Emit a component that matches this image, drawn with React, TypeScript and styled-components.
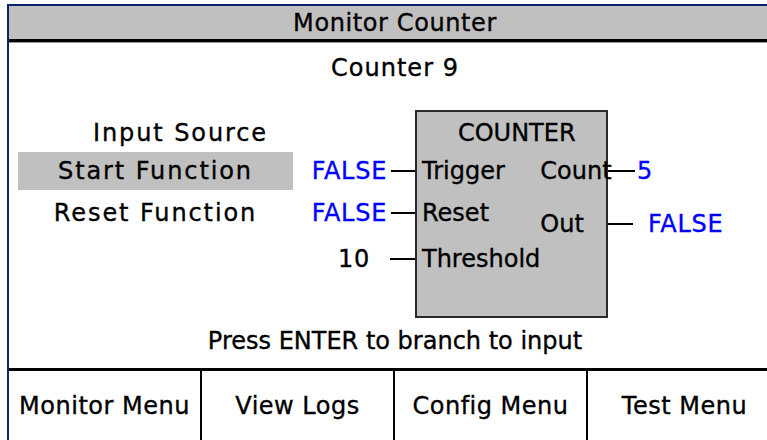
import React from 'react';
import styled, { createGlobalStyle } from 'styled-components';

const GlobalStyle = createGlobalStyle`
    html, body {
        margin: 0;
        padding: 0;
        background: #ffffff;
        overflow: hidden;
    }
    body {
        font-family: "DejaVu Sans", Verdana, sans-serif;
        color: #000000;
        -webkit-text-stroke: 0.35px currentColor;
    }
`;

const Screen = styled.div`
    box-sizing: border-box;
    margin: 4px 0 0 7px;
    width: 774px;
    height: 436px;
    border-top: 2px solid #0a246a;
    border-left: 2px solid #0a246a;
    display: flex;
    flex-direction: column;
    background: #ffffff;
`;

const TitleBar = styled.header`
    box-sizing: border-box;
    height: 36px;
    flex-shrink: 0;
    background: #c0c0c0;
    border-bottom: 3px solid #000000;
    box-shadow: 0 1px 0 #9a9a9a;
    display: flex;
    align-items: center;
    justify-content: center;
    font-size: 24px;
    line-height: 24px;
    letter-spacing: 0.6px;
`;

const Main = styled.main`
    flex: 1;
    display: flex;
    flex-direction: column;
    align-items: stretch;
`;

const Heading = styled.div`
    margin-top: 12px;
    text-align: center;
    font-size: 24px;
    line-height: 28px;
    letter-spacing: 1px;
`;

const Diagram = styled.div`
    margin-top: 28px;
    padding-left: 9px;
    height: 208px;
    display: grid;
    grid-template-columns: 275px 122px 193px 1fr;
    grid-template-rows: 4px 38px 38px 46px 46px 36px;
    font-size: 24px;
    line-height: 24px;
`;

const MenuItem = styled.div<{ $row: number; $active?: boolean; $indent?: number }>`
    grid-column: 1;
    grid-row: ${p => p.$row};
    display: flex;
    align-items: center;
    justify-content: center;
    padding-left: ${p => p.$indent ?? 0}px;
    background: ${p => (p.$active ? '#c0c0c0' : 'transparent')};
    letter-spacing: 1.9px;
`;

const InputPin = styled.div<{ $row: number }>`
    grid-column: 2;
    grid-row: ${p => p.$row};
    display: flex;
    align-items: center;
    justify-content: flex-end;
`;

const OutputPin = styled.div<{ $row: number; $low?: boolean }>`
    grid-column: 4;
    grid-row: ${p => p.$row};
    align-self: ${p => (p.$low ? 'end' : 'stretch')};
    height: ${p => (p.$low ? '24px' : 'auto')};
    display: flex;
    align-items: center;
`;

const Value = styled.span<{ $blue?: boolean }>`
    color: ${p => (p.$blue ? '#0000ff' : '#000000')};
    letter-spacing: 0.7px;
`;

const Wire = styled.span<{ $length: number; $gap: number; $side: 'left' | 'right' }>`
    display: block;
    width: ${p => p.$length}px;
    height: 2px;
    background: #000000;
    ${p => (p.$side === 'left' ? `margin-left: ${p.$gap}px;` : `margin-right: ${p.$gap}px;`)}
`;

const Block = styled.div`
    grid-column: 3;
    grid-row: 1 / -1;
    box-sizing: border-box;
    display: grid;
    grid-template-columns: 1fr auto;
    grid-template-rows: 2px 38px 38px 46px 46px 1fr;
    padding: 0 3px 0 5px;
    background: #c0c0c0;
    border: 2px solid #2a2a2a;
`;

const BlockLabel = styled.div<{ $row: number; $col: string; $low?: boolean; $center?: boolean }>`
    grid-row: ${p => p.$row};
    grid-column: ${p => p.$col};
    justify-self: ${p => (p.$center ? 'center' : 'auto')};
    align-self: ${p => (p.$low ? 'end' : 'center')};
    white-space: nowrap;
`;

const Prompt = styled.div`
    margin-top: 11px;
    text-align: center;
    font-size: 24px;
    line-height: 24px;
`;

const SoftKeys = styled.footer`
    box-sizing: border-box;
    height: 72px;
    flex-shrink: 0;
    border-top: 3px solid #000000;
    display: grid;
    grid-template-columns: repeat(4, 193px);
`;

const SoftKey = styled.div<{ $last?: boolean }>`
    display: flex;
    align-items: center;
    justify-content: center;
    border-right: ${p => (p.$last ? 'none' : '2px solid #000000')};
    font-size: 24px;
    letter-spacing: 0.5px;
`;

const keys = ['Monitor Menu', 'View Logs', 'Config Menu', 'Test Menu'];

function App() {
    return (
        <>
            <GlobalStyle />
            <Screen>
                <TitleBar>Monitor Counter</TitleBar>
                <Main>
                    <Heading>Counter 9</Heading>
                    <Diagram>
                        <MenuItem $row={2} $indent={50}>Input Source</MenuItem>
                        <MenuItem $row={3} $active>Start Function</MenuItem>
                        <MenuItem $row={4}>Reset Function</MenuItem>

                        <InputPin $row={3}>
                            <Value $blue>FALSE</Value>
                            <Wire $side="left" $gap={4} $length={24} />
                        </InputPin>
                        <InputPin $row={4}>
                            <Value $blue>FALSE</Value>
                            <Wire $side="left" $gap={4} $length={24} />
                        </InputPin>
                        <InputPin $row={5}>
                            <Value>10</Value>
                            <Wire $side="left" $gap={20} $length={25} />
                        </InputPin>

                        <Block>
                            <BlockLabel $row={2} $col="1 / -1" $center>COUNTER</BlockLabel>
                            <BlockLabel $row={3} $col="1">Trigger</BlockLabel>
                            <BlockLabel $row={3} $col="2">Count</BlockLabel>
                            <BlockLabel $row={4} $col="1">Reset</BlockLabel>
                            <BlockLabel $row={4} $col="2" $low>Out</BlockLabel>
                            <BlockLabel $row={5} $col="1">Threshold</BlockLabel>
                        </Block>

                        <OutputPin $row={3}>
                            <Wire $side="right" $gap={2} $length={27} />
                            <Value $blue>5</Value>
                        </OutputPin>
                        <OutputPin $row={4} $low>
                            <Wire $side="right" $gap={15} $length={25} />
                            <Value $blue>FALSE</Value>
                        </OutputPin>
                    </Diagram>
                    <Prompt>Press ENTER to branch to input</Prompt>
                </Main>
                <SoftKeys>
                    {keys.map((k, i) => (
                        <SoftKey key={k} $last={i === keys.length - 1}>{k}</SoftKey>
                    ))}
                </SoftKeys>
            </Screen>
        </>
    );
}

export default App;
